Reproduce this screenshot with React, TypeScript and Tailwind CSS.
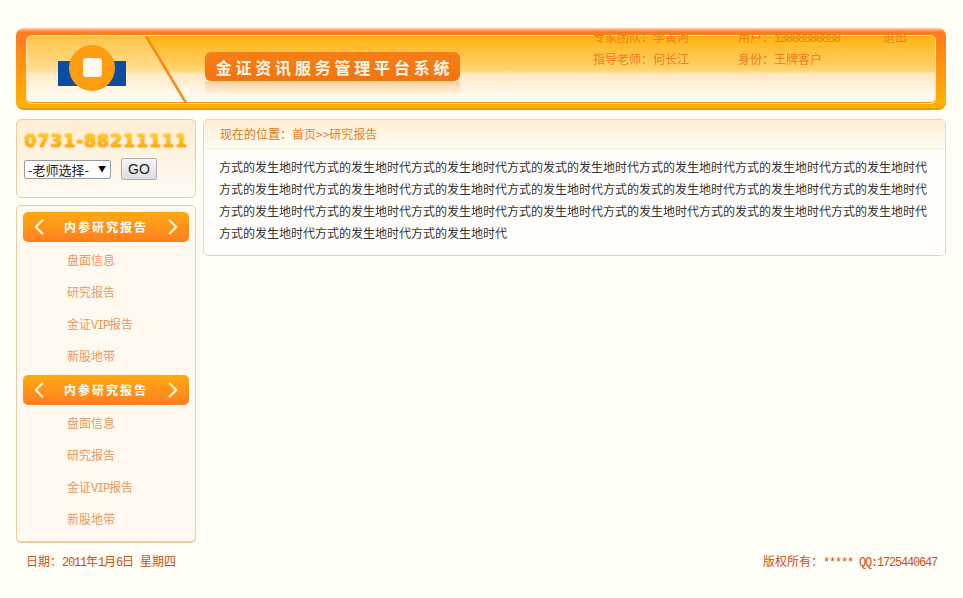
import { ChevronLeft, ChevronRight } from "lucide-react";

const cjk = "font-['Noto_Sans_CJK_SC','Liberation_Sans',sans-serif]";
const latin = "font-['Liberation_Mono',monospace] text-[12px] tracking-[-1.2px]";

const A = "方式的发生地时代";
const lines = [
  A + A + A + "方式的发式的发生地时代" + A + A + A,
  A + A + A + "方式的发生地时代方式的发式的发生地时代" + A + A,
  A + A + A + A + A + "方式的发式的发生地时代" + A,
  A + A + A,
];

const menuItems = [
  { name: "盘面信息" },
  { name: "研究报告" },
  { name: "金证", vip: "VIP", rest: "报告" },
  { name: "新股地带" },
];

// orange menu header with the two chevrons
const MenuHeader = () => (
  <div className="flex h-[30px] items-center justify-between rounded-[5px] bg-gradient-to-b from-[#ffa90f] to-[#ff7e20] px-[3px] text-[#fff1cc]">
    <ChevronLeft size={26} strokeWidth={2.2} />
    <span className="text-[12px] font-bold tracking-[2px] text-white">内参研究报告</span>
    <ChevronRight size={26} strokeWidth={2.2} />
  </div>
);

const MenuList = () => (
  <ul className="pb-[3px] pl-[44px] pt-[2px] text-[12px] leading-[32px] text-[#e8995f]">
    {menuItems.map((item) => (
      <li key={item.name} className="h-[32px]">
        {item.name}
        {item.vip && <span className={latin}>{item.vip}</span>}
        {item.rest}
      </li>
    ))}
  </ul>
);

const Header = () => (
  <header className="h-[82px] rounded-[8px] border-b-2 border-[#e99a00] bg-[linear-gradient(to_bottom,#ffd2ad_0px,#ff7a20_4px,#ff8a14_30%,#ffb400_100%)] px-[11px] pt-2">
    <div className="relative flex h-[67px] rounded-[5px] border-b border-[#ee9a00] bg-[linear-gradient(to_bottom,#ffb312_0%,#ffd472_52%,#ffe8c2_58%,#fffefb_100%)] shadow-[0_0_0_1px_#ffe6b5]">
      <svg width="160" height="67" viewBox="0 0 160 67" className="shrink-0 rounded-l-[5px]">
        <defs>
          <linearGradient id="leftPanel" x1="0" y1="0" x2="0" y2="1">
            <stop offset="0" stopColor="#ffc445" />
            <stop offset="0.52" stopColor="#ffdf94" />
            <stop offset="0.58" stopColor="#ffecc9" />
            <stop offset="1" stopColor="#fffefb" />
          </linearGradient>
        </defs>
        <path d="M5 0H118L157 66H5a5 5 0 0 1-5-5V5a5 5 0 0 1 5-5Z" fill="url(#leftPanel)" />
        <path d="M119 0L159 67" stroke="#f58a14" strokeWidth="2.5" />
        <rect x="31" y="25" width="68" height="25" fill="#0b4da2" />
        <circle cx="65" cy="32" r="23" fill="#fd9d0f" />
        <rect x="56" y="22" width="19" height="19" rx="3" fill="#fff8ee" />
      </svg>
      <div className="ml-[18px] mt-4 flex w-[255px] flex-col">
        <div className="flex h-[29px] items-center justify-center rounded-[6px] bg-gradient-to-b from-[#f57f18] to-[#f4730f] pl-[4px] text-[16px] font-bold tracking-[3.8px] text-[#fff6e6]">
          金证资讯服务管理平台系统
        </div>
        <div className="h-[15px] rounded-b-[6px] bg-gradient-to-b from-[#fad3a3] to-transparent" />
      </div>
      <div className="absolute left-[566px] top-[-10px] grid auto-rows-[22px] grid-cols-[145px_145px_auto] text-[12px] leading-[22px] text-[#f07c16]">
        <span>专家团队：李黄河</span>
        <span>
          用户：<span className={latin}>13888888888</span>
        </span>
        <span>退出</span>
        <span>指导老师：何长江</span>
        <span>身份：王牌客户</span>
      </div>
    </div>
  </header>
);

export default function App() {
  return (
    <div className={`min-h-screen bg-[#fffef7] pl-4 pr-[17px] pt-[28px] ${cjk}`}>
      <Header />

      <div className="mt-[9px] flex gap-[7px]">
        <aside className="flex w-[180px] shrink-0 flex-col gap-[7px]">
          <div className="h-[79px] rounded-[5px] border border-[#eccba0] bg-gradient-to-b from-[#ffedd3] to-[#fffbf3] px-[7px] pt-[10px]">
            <div className="w-fit bg-gradient-to-b from-[#ffdf1c] to-[#f79a06] bg-clip-text font-['DejaVu_Sans',sans-serif] text-[18px] font-bold leading-[22px] tracking-[0.45px] text-transparent drop-shadow-[0_0_1px_#e98a10]">
              0731-88211111
            </div>
            <div className="mt-[6px] flex items-start gap-[10px]">
              <div className="relative mt-[2px]">
                <select className="block h-[19px] w-[87px] appearance-none rounded-[2px] border border-[#9a9a9a] bg-white pl-[3px] text-[13px] leading-[17px] text-[#222]">
                  <option>-老师选择-</option>
                </select>
                <span className="pointer-events-none absolute right-[5px] top-[4px] text-[8px] leading-[10px] text-black">▼</span>
              </div>
              <button className="h-[22px] w-[36px] rounded-[2px] border border-[#aeaeae] bg-gradient-to-b from-[#f6f6f6] to-[#dddddd] font-['Liberation_Sans',sans-serif] text-[14px] text-[#222]">
                GO
              </button>
            </div>
          </div>

          <div className="h-[338px] rounded-[5px] border border-b-2 border-[#eccba0] bg-[#fff9f0] px-[6px] pt-[6px]">
            <MenuHeader />
            <MenuList />
            <MenuHeader />
            <MenuList />
          </div>
        </aside>

        <main className="h-[137px] flex-1 rounded-[5px] border border-[#eed3a6] bg-[#fffefb]">
          <div className="flex h-[29px] items-center rounded-t-[5px] border-b border-[#f5eee2] bg-gradient-to-b from-[#ffeed2] to-[#fffcf5] pl-[16px] text-[12px] text-[#ea7f1e]">
            <span className="text-[#df7415]">现在的位置：</span>首页&gt;&gt;研究报告
          </div>
          <div className="pl-[15px] pt-[7px] text-[12px] leading-[22px] text-[#333]">
            {lines.map((line, i) => (
              <p key={i} className="whitespace-nowrap">
                {line}
              </p>
            ))}
          </div>
        </main>
      </div>

      <footer className="mt-[9px] flex items-center justify-between pl-[10px] pr-[9px] text-[12px] leading-[18px] text-[#cf4f12]">
        <span>
          日期：<span className={latin}>2011</span>年<span className={latin}>1</span>月<span className={latin}>6</span>日
          <span className="ml-[6px]">星期四</span>
        </span>
        <span>
          版权所有：<span className={latin}>***** QQ:1725440647</span>
        </span>
      </footer>
    </div>
  );
}
